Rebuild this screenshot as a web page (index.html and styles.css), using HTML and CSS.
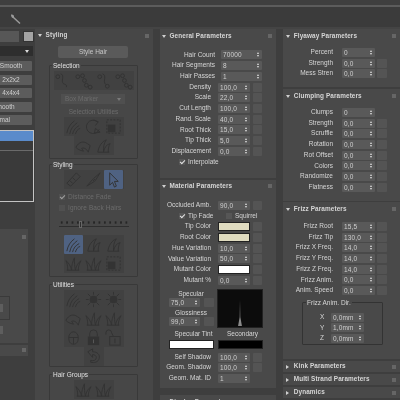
FILE: index.html
```html
<!DOCTYPE html>
<html lang="en">
<head>
<meta charset="utf-8">
<title>Hair and Fur</title>
<link rel="stylesheet" href="styles.css">
</head>
<body>
<svg class="defs" width="0" height="0">
  <symbol id="tuft" viewBox="0 0 20 20"><path d="M3 17C4 11 7 7 11 4M6 18C7 12 10 9 14 6M9 18C10 14 12 11 16 9M12 18C13 15 14 13 17 12"/></symbol>
  <symbol id="tuft2" viewBox="0 0 20 20"><path d="M4 17C5 11 8 6 13 4C10 8 10 12 10 17M10 17C11 12 13 9 17 8C15 11 15 14 15 17M4 17H16"/></symbol>
  <symbol id="grass" viewBox="0 0 20 20"><path d="M4 17C4 12 3 9 2 7C5 9 7 13 8 17M8 17C8 12 9 8 11 4C11 9 11 13 12 17M12 17C13 12 15 9 18 7C16 10 15 14 15 17M3 17H16"/></symbol>
  <symbol id="curl" viewBox="0 0 20 20"><circle cx="4" cy="6" r="2"/><path d="M7 3C11 4 8 9 9 12C10 15 14 13 13 17"/></symbol>
  <symbol id="chain" viewBox="0 0 20 20"><circle cx="4" cy="6" r="2"/><circle cx="9" cy="5" r="2"/><circle cx="11" cy="10" r="2"/><circle cx="13" cy="15" r="2"/><circle cx="17" cy="17" r="2"/></symbol>
  <symbol id="chain2" viewBox="0 0 20 20"><circle cx="6" cy="6" r="2"/><path d="M9 3C14 5 9 10 12 14"/><circle cx="14" cy="16" r="2"/></symbol>
  <symbol id="rotate" viewBox="0 0 20 20"><path d="M14 5A7 7 0 1 0 16 13"/><path d="M10 3L15 5L12 9M12 12L17 16L11 17Z"/></symbol>
  <symbol id="box" viewBox="0 0 20 20"><rect x="3" y="3" width="14" height="14" stroke-dasharray="2 1.5"/><rect class="fill" x="4" y="8" width="8" height="8"/></symbol>
  <symbol id="brush" viewBox="0 0 20 20"><path d="M2 12C5 6 10 5 14 8L17 10L15 17C13 13 10 12 8 13L10 16C6 15 4 14 2 12Z"/></symbol>
  <symbol id="comb" viewBox="0 0 20 20"><path d="M3 14L13 3L17 7L7 17ZM6 11L9 14M9 8L12 11"/></symbol>
  <symbol id="razor" viewBox="0 0 20 20"><path d="M3 17L9 10L11 12ZM10 9L17 3L12 11Z"/></symbol>
  <symbol id="arrow" viewBox="0 0 20 20"><path d="M6 3L15 12L11 12L13 17L11 18L9 13L6 16Z"/></symbol>
  <symbol id="burst" viewBox="0 0 20 20"><circle class="fill" cx="10" cy="10" r="4"/><path d="M10 2V5M10 15V18M2 10H5M15 10H18M4 4L7 7M13 13L16 16M16 4L13 7M7 13L4 16"/></symbol>
  <symbol id="head" viewBox="0 0 20 20"><path d="M5 10A5 6 0 0 1 15 10C15 15 13 17 10 17C7 17 5 15 5 10ZM5 10H15M10 10V17"/></symbol>
  <symbol id="lock" viewBox="0 0 20 20"><path d="M6 9V6A4 4 0 0 1 14 6V9"/><rect class="fill" x="4" y="9" width="12" height="9"/><path class="lite" d="M10 12V16"/></symbol>
  <symbol id="unlock" viewBox="0 0 20 20"><path d="M2 7V5A3 3 0 0 1 8 5L10 9"/><rect x="6" y="9" width="11" height="9"/><path d="M11.500 11V16"/></symbol>
  <symbol id="undo" viewBox="0 0 20 20"><path d="M4 5L9 2V5C14 5 17 8 16 12C15 16 11 17 7 16L7 14C10 15 13 14 13 11C13 9 11 8 9 8V11Z"/></symbol>
  <symbol id="wrench" viewBox="0 0 12 12"><path d="M1 1.500C3 1 4.500 2.500 4 4L10.500 10L9.500 11L3 5C1.500 5 1 3 1 1.500Z"/></symbol>
</svg>

<div class="page">
  <header class="top">
    <div class="top-strip"></div>
    <div class="top-line"></div>
    <div class="top-bar">
      <svg class="wrench"><use href="#wrench"/></svg>
    </div>
  </header>

  <main class="main">
    <section class="col-left">
      <div class="field-row"><div class="field"></div><div class="swatch"></div></div>
      <div class="drop"><i class="tri"></i></div>
      <div class="btns">
        <div class="btn">Smooth</div>
        <div class="btn">2x2x2</div>
        <div class="btn">4x4x4</div>
        <div class="btn shift">Unsmooth</div>
        <div class="btn shift">Normal</div>
      </div>
      <div class="list"><div class="list-sel"></div><div class="list-line"></div></div>
      <div class="lpanel">
        <b class="pin"></b>
        <div class="lbox"><b class="lchip"></b></div>
        <b class="lchip lchip-out"></b>
      </div>
      <div class="lhead"><b class="pin"></b></div>
    </section>

    <section class="col-style">
      <div class="head dim-head"><i class="open"></i><span>Styling</span><b class="pin"></b></div>
      <div class="style-btn">Style Hair</div>

      <div class="group g-sel">
        <div class="gtitle">Selection</div>
        <div class="tray tray-4">
          <svg><use href="#curl"/></svg><svg><use href="#chain"/></svg><svg><use href="#chain2"/></svg><svg><use href="#chain"/></svg>
        </div>
        <div class="marker">Box Marker<i class="tri"></i></div>
        <div class="dim-title">Selection Utilities</div>
        <div class="tray tray-3">
          <svg><use href="#tuft"/></svg><svg><use href="#rotate"/></svg><svg><use href="#box"/></svg>
        </div>
        <div class="tray tray-2">
          <svg><use href="#brush"/></svg><svg><use href="#tuft2"/></svg>
        </div>
      </div>

      <div class="group g-sty">
        <div class="gtitle">Styling</div>
        <div class="tray tray-3">
          <svg><use href="#comb"/></svg><svg><use href="#razor"/></svg><svg class="sel"><use href="#arrow"/></svg>
        </div>
        <div class="dim-check"><i class="cb on"></i>Distance Fade</div>
        <div class="dim-check"><i class="cb"></i>Ignore Back Hairs</div>
        <div class="slider"><i class="slide-knob"></i></div>
        <div class="tray tray-3 tray-wide">
          <svg class="sel"><use href="#tuft"/></svg><svg><use href="#tuft2"/></svg><svg><use href="#tuft2"/></svg>
          <svg><use href="#grass"/></svg><svg><use href="#grass"/></svg><svg><use href="#box"/></svg>
        </div>
      </div>

      <div class="group g-uti">
        <div class="gtitle">Utilities</div>
        <div class="tray tray-3">
          <svg><use href="#tuft"/></svg><svg><use href="#burst"/></svg><svg><use href="#burst"/></svg>
          <svg><use href="#brush"/></svg><svg><use href="#grass"/></svg><svg><use href="#grass"/></svg>
          <svg><use href="#head"/></svg><svg><use href="#lock"/></svg><svg><use href="#unlock"/></svg>
        </div>
        <div class="tray tray-1"><svg><use href="#undo"/></svg></div>
      </div>

      <div class="group g-grp">
        <div class="gtitle">Hair Groups</div>
        <div class="tray tray-2"><svg><use href="#grass"/></svg><svg><use href="#grass"/></svg></div>
      </div>
    </section>

    <section class="col-mid">
      <div class="panel p-general">
        <div class="head"><i class="open"></i><span>General Parameters</span><b class="pin"></b></div>
        <div class="rows">
          <div class="row long"><span class="lab">Hair Count</span><span class="spin">70000<i></i></span></div>
          <div class="row long"><span class="lab">Hair Segments</span><span class="spin">8<i></i></span></div>
          <div class="row long"><span class="lab">Hair Passes</span><span class="spin">1<i></i></span></div>
          <div class="row"><span class="lab">Density</span><span class="spin">100,0<i></i></span><b class="sq"></b></div>
          <div class="row"><span class="lab">Scale</span><span class="spin">22,0<i></i></span><b class="sq"></b></div>
          <div class="row"><span class="lab">Cut Length</span><span class="spin">100,0<i></i></span><b class="sq"></b></div>
          <div class="row"><span class="lab">Rand. Scale</span><span class="spin">40,0<i></i></span><b class="sq"></b></div>
          <div class="row"><span class="lab">Root Thick</span><span class="spin">15,0<i></i></span><b class="sq"></b></div>
          <div class="row"><span class="lab">Tip Thick</span><span class="spin">5,0<i></i></span><b class="sq"></b></div>
          <div class="row"><span class="lab">Displacement</span><span class="spin">0,0<i></i></span><b class="sq"></b></div>
          <div class="row checks"><i class="cb on"></i><span>Interpolate</span></div>
        </div>
      </div>

      <div class="panel p-material">
        <div class="head"><i class="open"></i><span>Material Parameters</span><b class="pin"></b></div>
        <div class="rows">
          <div class="row"><span class="lab">Occluded Amb.</span><span class="spin">90,0<i></i></span><b class="sq"></b></div>
          <div class="row checks"><i class="cb on"></i><span class="chk-a">Tip Fade</span><i class="cb"></i><span>Squirrel</span></div>
          <div class="row"><span class="lab">Tip Color</span><span class="col c-cream"></span><b class="sq"></b></div>
          <div class="row"><span class="lab">Root Color</span><span class="col c-cream"></span><b class="sq"></b></div>
          <div class="row"><span class="lab">Hue Variation</span><span class="spin">10,0<i></i></span><b class="sq"></b></div>
          <div class="row"><span class="lab">Value Variation</span><span class="spin">50,0<i></i></span><b class="sq"></b></div>
          <div class="row"><span class="lab">Mutant Color</span><span class="col c-white"></span><b class="sq"></b></div>
          <div class="row"><span class="lab">Mutant %</span><span class="spin">0,0<i></i></span><b class="sq"></b></div>
        </div>
        <div class="spec">
          <div class="spec-left">
            <div class="spec-lab">Specular</div>
            <div class="spec-row"><span class="spin">75,0<i></i></span><b class="sq"></b></div>
            <div class="spec-lab">Glossiness</div>
            <div class="spec-row"><span class="spin">99,0<i></i></span><b class="sq"></b></div>
          </div>
          <svg class="preview" viewBox="0 0 45 38"><path d="M22 37L22.500 10L23 37Z M20.500 37L22.500 26L24.500 37Z"/></svg>
        </div>
        <div class="tint-labs"><span>Specular Tint</span><span>Secondary</span></div>
        <div class="tints"><span class="tint t-white"></span><span class="tint t-black"></span></div>
        <div class="rows rows-end">
          <div class="row"><span class="lab">Self Shadow</span><span class="spin">100,0<i></i></span><b class="sq"></b></div>
          <div class="row"><span class="lab">Geom. Shadow</span><span class="spin">100,0<i></i></span><b class="sq"></b></div>
          <div class="row long-id"><span class="lab">Geom. Mat. ID</span><span class="spin">1<i></i></span></div>
        </div>
      </div>

      <div class="panel p-cut">
        <div class="head"><i class="open"></i><span>Display Parameters</span><b class="pin"></b></div>
      </div>
    </section>

    <section class="col-right">
      <div class="panel p-fly">
        <div class="head"><i class="open"></i><span>Flyaway Parameters</span><b class="pin"></b></div>
        <div class="rows">
          <div class="row"><span class="lab">Percent</span><span class="spin">0<i></i></span></div>
          <div class="row"><span class="lab">Strength</span><span class="spin">0,0<i></i></span><b class="sq"></b></div>
          <div class="row"><span class="lab">Mess Stren</span><span class="spin">0,0<i></i></span><b class="sq"></b></div>
        </div>
      </div>
      <div class="panel p-clump">
        <div class="head"><i class="open"></i><span>Clumping Parameters</span><b class="pin"></b></div>
        <div class="rows">
          <div class="row"><span class="lab">Clumps</span><span class="spin">0<i></i></span></div>
          <div class="row"><span class="lab">Strength</span><span class="spin">0,0<i></i></span><b class="sq"></b></div>
          <div class="row"><span class="lab">Scruffle</span><span class="spin">0,0<i></i></span><b class="sq"></b></div>
          <div class="row"><span class="lab">Rotation</span><span class="spin">0,0<i></i></span><b class="sq"></b></div>
          <div class="row"><span class="lab">Rot Offset</span><span class="spin">0,0<i></i></span><b class="sq"></b></div>
          <div class="row"><span class="lab">Colors</span><span class="spin">0,0<i></i></span><b class="sq"></b></div>
          <div class="row"><span class="lab">Randomize</span><span class="spin">0,0<i></i></span><b class="sq"></b></div>
          <div class="row"><span class="lab">Flatness</span><span class="spin">0,0<i></i></span><b class="sq"></b></div>
        </div>
      </div>
      <div class="panel p-frizz">
        <div class="head"><i class="open"></i><span>Frizz Parameters</span><b class="pin"></b></div>
        <div class="rows">
          <div class="row"><span class="lab">Frizz Root</span><span class="spin">15,5<i></i></span><b class="sq"></b></div>
          <div class="row"><span class="lab">Frizz Tip</span><span class="spin">130,0<i></i></span><b class="sq"></b></div>
          <div class="row"><span class="lab">Frizz X Freq.</span><span class="spin">14,0<i></i></span><b class="sq"></b></div>
          <div class="row"><span class="lab">Frizz Y Freq.</span><span class="spin">14,0<i></i></span><b class="sq"></b></div>
          <div class="row"><span class="lab">Frizz Z Freq.</span><span class="spin">14,0<i></i></span><b class="sq"></b></div>
          <div class="row"><span class="lab">Frizz Anim.</span><span class="spin">0,0<i></i></span><b class="sq"></b></div>
          <div class="row"><span class="lab">Anim. Speed</span><span class="spin">0,0<i></i></span><b class="sq"></b></div>
        </div>
        <div class="dir">
          <div class="dir-title">Frizz Anim. Dir.</div>
          <div class="dir-row"><span>X</span><span class="spin">0,0mm<i></i></span></div>
          <div class="dir-row"><span>Y</span><span class="spin">1,0mm<i></i></span></div>
          <div class="dir-row"><span>Z</span><span class="spin">0,0mm<i></i></span></div>
        </div>
      </div>
      <div class="closed"><i class="shut"></i><span>Kink Parameters</span><b class="pin"></b></div>
      <div class="closed"><i class="shut"></i><span>Multi Strand Parameters</span><b class="pin"></b></div>
      <div class="closed"><i class="shut"></i><span>Dynamics</span><b class="pin"></b></div>
    </section>
  </main>
</div>
</body>
</html>
```
FILE: styles.css
```css
* { box-sizing: border-box; }
html, body { margin: 0; width: 400px; height: 400px; overflow: hidden; background: #3e3e3e; }
.defs { display: block; height: 0; }
.page {
  width: 400px; height: 400px; overflow: hidden;
  font: 6.5px/1 "Liberation Sans", Arial, sans-serif;
  color: #d6d6d6;
  filter: blur(.45px);
}
i, b { display: block; font-style: normal; flex: none; }
svg { fill: none; stroke: #333; stroke-width: 1; }
.fill { fill: #333; stroke: none; }
.lite { stroke: #5a5a5a; }

/* top */
.top { height: 29px; background: #3e3e3e; }
.top-strip { height: 5px; background: #3f3f3f; }
.top-line { height: 2px; background: #5c5c5c; }
.top-bar { height: 22px; padding: 6px 0 0 10px; background: #3b3b3b; border-bottom: 2px solid #444; }
.wrench { width: 12px; height: 12px; fill: #9a9a9a; stroke: none; display: block; }

.main { display: flex; height: 371px; }

/* left column */
.col-left { width: 35px; flex: none; padding-top: 2px; overflow: hidden; }
.field-row { display: flex; height: 11px; gap: 4px; }
.field { width: 19px; background: #575757; }
.swatch { width: 11px; background: #a3a3a3; border: 1px solid #333; }
.drop { margin-top: 4px; width: 33px; height: 10px; background: #2e2e2e; display: flex; align-items: center; padding-left: 25px; }
.tri { width: 0; height: 0; border: 2.200px solid transparent; border-top: 3px solid #dcdcdc; border-bottom: 0; }
.btns { margin-top: 5px; display: flex; flex-direction: column; gap: 3.500px; }
.btn { margin-left: -10px; width: 42px; height: 10px; line-height: 10px; background: #5c5c5c; border-radius: 1px; text-align: center; color: #cfcfcf; }
.shift { padding-right: 18px; white-space: nowrap; text-indent: -5px; }
.list { margin-top: 5px; width: 34px; height: 72px; background: #3a3a3a; border: 1px solid #c4c4c4; border-left: 0; }
.list-sel { height: 10px; background: #5a8bcb; }
.list-line { margin-top: 9px; height: 1px; background: #6a6a6a; }
.lpanel { margin-top: 27px; width: 28px; height: 114px; background: #494949; padding: 6px 0 0 22px; }
.pin { width: 4px; height: 4px; background: #666; }
.lbox { margin: 57px 0 0 -22px; width: 10px; height: 24px; border: 1px solid #3a3a3a; border-left: 0; padding: 7px 0 0 0; }
.lchip { width: 3px; height: 8px; background: #5e5e5e; }
.lchip-out { margin: 6px 0 0 -22px; }
.lhead { margin-top: 2px; width: 28px; height: 11px; background: #494949; padding: 3px 0 0 22px; }

/* styling column */
.col-style { width: 118px; flex: none; background: #474747; padding-left: 14px; margin-right: 7px; overflow: hidden; }
.head { display: flex; align-items: center; height: 13px; font-size: 6.400px; font-weight: bold; letter-spacing: .1px; }
.head .open { width: 0; height: 0; border: 2.200px solid transparent; border-top: 3px solid #cfcfcf; border-bottom: 0; margin-right: 4px; }
.head .pin { margin-left: auto; margin-right: 4px; }
.dim-head { margin-left: -11px; color: #d4d4d4; }
.dim-head .open { margin-right: 3.600px; }
.style-btn { margin: 4px 0 0 9px; width: 70px; height: 12px; line-height: 12px; text-align: center; background: #5a5a5a; border-radius: 2px; color: #c8c8c8; }
.group { width: 89px; border: 1px solid #393939; border-radius: 1px; margin-top: 7px; }
.g-sel { height: 94px; }
.g-sty { height: 113px; margin-top: 5px; }
.g-uti { height: 83px; }
.g-grp { height: 60px; }
.gtitle { width: fit-content; margin: -3px 0 1px 2px; padding: 0 1px; height: 7px; background: #474747; color: #e0e0e0; }
.tray { display: grid; grid-auto-rows: 19px; background: #414141; width: fit-content; margin: 0 auto; }
.tray svg { width: 19px; height: 19px; display: block; }
.tray svg.sel { background: #4f6282; border-radius: 1px; }
.tray-4 { grid-template-columns: repeat(4, 20px); }
.tray-3 { grid-template-columns: repeat(3, 20px); }
.tray-2 { grid-template-columns: repeat(2, 20px); }
.tray-1 { grid-template-columns: 20px; }
.g-sel .tray-3 { margin-top: 1px; }
.marker { margin: 4px 0 0 11px; width: 64px; height: 10px; padding: 0 4px; display: flex; align-items: center; justify-content: space-between; background: #4f4f4f; color: #6c6c6c; }
.marker .tri { border-top-color: #7a7a7a; }
.dim-title { margin-top: 5px; height: 7px; text-align: center; color: #6c6c6c; }
.dim-check { display: flex; align-items: center; gap: 3px; height: 11px; padding-left: 9px; color: #6c6c6c; letter-spacing: .1px; }
.tray + .dim-check { margin-top: 2.500px; }
.dim-check .cb { background: #505050; }
.cb { width: 6px; height: 6px; background: #565656; }
.cb.on::after { content: ""; display: block; width: 4px; height: 2px; margin: 1px 0 0 1px; border-left: 1.200px solid #e4e4e4; border-bottom: 1.200px solid #e4e4e4; transform: rotate(-45deg); }
.dim-check .cb.on::after { border-color: #a0a0a0; }
.slider { margin: 7px 0 0 9px; width: 70px; height: 6px; border-bottom: 1px solid #2e2e2e; background-image: radial-gradient(circle, #262626 1px, transparent 1.300px); background-size: 5.400px 3px; background-repeat: repeat-x; }
.slide-knob { margin-left: 20px; width: 3px; height: 7px; background: #2e2e2e; border: 1px solid #666; }
.tray-wide { margin-top: 8px; }

/* middle column */
.col-mid { width: 116px; flex: none; margin-right: 7px; }
.panel { background: #494949; }
.panel .head { padding-left: 1.500px; padding-top: 1px; }
.p-general { height: 149px; }
.p-general .rows { margin-top: 7.600px; }
.p-material { margin-top: 2px; height: 208px; }
.p-material .head { height: 11px; }
.p-cut { margin-top: 7px; height: 10px; }
.rows { display: flex; flex-direction: column; }
.row { display: flex; align-items: center; height: 10.700px; }
.lab { width: 51px; text-align: right; margin-right: 7px; white-space: nowrap; flex: none; color: #d6d6d6; }
.spin { width: 32px; height: 9px; line-height: 9px; background: #595959; padding-left: 2px; display: flex; align-items: center; color: #cfcfcf; letter-spacing: .15px; flex: none; border-radius: 1px; }
.spin i { margin-left: auto; margin-right: 2px; width: 3px; }
.spin i::before, .spin i::after { content: ""; display: block; width: 0; height: 0; border: 1.400px solid transparent; }
.spin i::before { border-bottom: 2px solid #e0e0e0; border-top: 0; margin-bottom: 1px; }
.spin i::after { border-top: 2px solid #e0e0e0; border-bottom: 0; }
.sq { width: 9px; height: 9px; margin-left: 3px; background: #545454; border-radius: 1px; }
.long .lab { width: 55px; margin-right: 6px; }
.long .spin { width: 41px; }
.checks { padding-left: 19px; gap: 3px; }
.chk-a { margin-right: 8px; width: 27px; }
.col { width: 32px; height: 9px; border: 1px solid #222; flex: none; }
.c-cream { background: #dfdbbf; }
.c-white { background: #fff; }
.p-material .rows { margin-top: 9px; }
.spec { display: flex; margin-top: 3px; padding-left: 9px; gap: 3px; height: 39px; }
.spec-left { width: 45px; }
.spec-lab { height: 9px; line-height: 9px; text-align: center; width: 44px; }
.spec-row { display: flex; height: 10px; align-items: center; }
.spec-row .spin { width: 31px; }
.spec-row .sq { width: 10px; margin-left: 4px; }
.preview { width: 46px; height: 39px; background: #0c0c0c; border: 1px solid #222; fill: #8a8a8a; stroke: none; flex: none; }
.tint-labs { display: flex; margin-top: 3px; padding-left: 9px; height: 8px; }
.tint-labs span { width: 49px; text-align: center; }
.tints { display: flex; padding-left: 9px; gap: 4px; margin-top: 1px; }
.tint { width: 45px; height: 9px; border: 1px solid #222; }
.t-white { background: #fff; }
.t-black { background: #000; }
.p-material .rows-end { margin-top: 3.200px; }

/* right column */
.col-right { flex: 1; min-width: 0; }
.col-right .panel .head { padding-left: 2.800px; }
.col-right .lab { width: 50px; margin-right: 9px; }
.col-right .spin { width: 33px; }
.col-right .sq { width: 10px; margin-left: 2px; }
.p-fly { height: 58px; }
.p-fly .rows { margin-top: 5px; }
.p-clump { margin-top: 2px; height: 112px; }
.p-clump .rows { margin-top: 5px; }
.p-frizz { margin-top: 1px; height: 157px; }
.p-frizz .rows { margin-top: 6px; }
.dir { margin: 6px 0 0 19px; width: 81px; height: 43px; border: 1px solid #333; border-radius: 1px; }
.dir-title { width: fit-content; margin: -3px 0 5px 3px; padding: 0 1px; height: 7px; background: #494949; }
.dir-row { display: flex; height: 10.700px; align-items: center; padding-left: 17px; }
.dir-row span:first-child { width: 11px; }
.closed { display: flex; align-items: center; height: 11px; margin-top: 2px; padding-left: 2.800px; background: #494949; font-size: 6.400px; font-weight: bold; letter-spacing: .1px; }
.shut { width: 0; height: 0; border: 2.200px solid transparent; border-left: 3px solid #cfcfcf; border-right: 0; margin-right: 5px; }
.closed .pin { margin-left: auto; margin-right: 4px; }
```
